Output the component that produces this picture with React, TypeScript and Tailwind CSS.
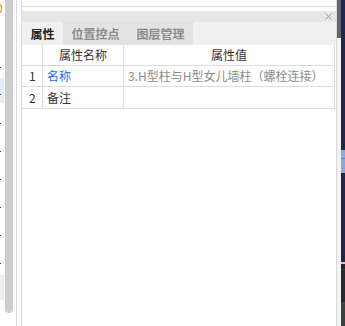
const font = { fontFamily: '"Noto Sans CJK SC", "Noto Sans", sans-serif' };

const tabs = [
  { label: "属性", w: "w-[41px]" },
  { label: "位置控点", w: "w-[65px]" },
  { label: "图层管理", w: "w-[65px]" },
];

const rows = [
  { no: "1", name: "名称", value: "3.H型柱与H型女儿墙柱（螺栓连接）", link: true },
  { no: "2", name: "备注", value: "", link: false },
];

const LeftStrip = () => (
  <div className="relative w-[5px] h-full overflow-hidden bg-white">
    <span className="absolute -left-[4px] top-0 text-[12px] leading-[16px] text-[#d08a1c]">0</span>
    <div className="absolute left-0 top-[78px] w-[4px] h-[25px] bg-[#e4effc]" />
    <div className="absolute left-0 top-[275px] w-[4px] h-[25px] bg-[#efefef]" />
    {[67, 94, 123, 151, 179, 207, 235, 263].map((y) => (
      <div key={y} className="absolute left-0 w-px h-px bg-[#5a3a3a]" style={{ top: y }} />
    ))}
  </div>
);

const RightStrip = () => (
  <div className="flex h-full">
    <div className="w-[4px] flex flex-col">
      <div className="h-[38px] bg-[#5f6676]" />
      <div className="flex-1 bg-[#f3f3f3]" />
    </div>
    <div className="w-[4px] flex flex-col">
      <div className="h-[150px] bg-[#1d2550]" />
      <div className="h-[8px] bg-[#8ba5f3]" />
      <div className="h-px bg-[#6f83c9]" />
      <div className="h-[14px] bg-[#8ba5f3]" />
      <div className="h-[89px] bg-[#1d2550]" />
      <div className="h-[2px] bg-[#c9cbd1]" />
      <div className="h-[5px] bg-[#20242c]" />
      <div className="h-px bg-[#7a1c24]" />
      <div className="h-[32px] bg-[#252a32]" />
      <div className="flex-1 bg-[#3c3f44]" />
    </div>
  </div>
);

export default function App() {
  return (
    <div className="w-[345px] h-[326px] flex bg-white overflow-hidden text-[12px]" style={font}>
      <LeftStrip />
      <div className="w-[8px] h-[313px] bg-[#cdcdcd] rounded-b-[4px]" />
      <div className="w-[3px]" />
      <div className="w-px h-full bg-[#dcdcdc]" />
      <div className="w-[4px]" />

      {/* panel */}
      <div className="w-[317px] h-full border-x border-[#d9d9d9] flex flex-col bg-white">
        <div className="h-[7px] border-b border-[#dcdcdc]" />
        <div className="h-[4px]" />
        <div className="h-[11px] bg-[#e6e6e6] flex items-center justify-end pr-[4px]">
          <svg viewBox="0 0 8 8" className="w-[7px] h-[7px]" stroke="#9a9a9a" strokeWidth="1.1">
            <path d="M0.5 0.5 L7.5 7.5 M7.5 0.5 L0.5 7.5" />
          </svg>
        </div>
        <div className="h-[23px] bg-[#f0f0f0] flex">
          {tabs.map((t, i) => (
            <div
              key={t.label}
              className={
                i === 0
                  ? `${t.w} flex items-center justify-center font-bold text-[#222] bg-[#f0f0f0]`
                  : `${t.w} flex items-center justify-center font-bold text-[#8c8c8c] bg-[#e3e3e3]`
              }
            >
              {t.label}
            </div>
          ))}
        </div>

        {/* table */}
        <div className="w-[313px] border-r border-b border-[#dcdcdc]">
          <div className="grid grid-cols-[21px_81px_1fr] h-[21px] border-b border-[#dcdcdc] text-[#333]">
            <div className="border-r border-[#dcdcdc]" />
            <div className="border-r border-[#dcdcdc] flex items-center justify-center">属性名称</div>
            <div className="flex items-center justify-center">属性值</div>
          </div>
          {rows.map((r, i) => (
            <div
              key={r.no}
              className={
                i === rows.length - 1
                  ? "grid grid-cols-[21px_81px_1fr] h-[21px]"
                  : "grid grid-cols-[21px_81px_1fr] h-[21px] border-b border-[#dcdcdc]"
              }
            >
              <div className="border-r border-[#dcdcdc] flex items-center pl-[7px] text-[#333]">{r.no}</div>
              <div
                className={
                  r.link
                    ? "border-r border-[#dcdcdc] flex items-center pl-[4px] text-[#1f6fe5]"
                    : "border-r border-[#dcdcdc] flex items-center pl-[4px] text-[#333]"
                }
              >
                {r.name}
              </div>
              <div className="flex items-center pl-[4px] text-[#8c8c8c] whitespace-nowrap overflow-hidden">
                {r.value}
              </div>
            </div>
          ))}
        </div>
        <div className="flex-1" />
      </div>

      <RightStrip />
    </div>
  );
}
